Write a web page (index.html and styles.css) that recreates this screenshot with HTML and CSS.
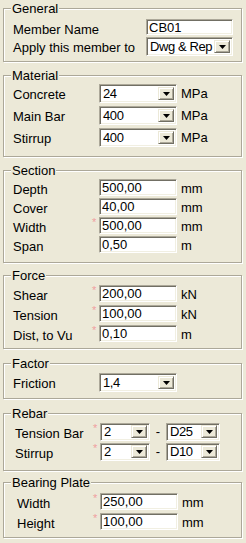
FILE: index.html
```html
<!DOCTYPE html>
<html lang="en">
<head>
  <meta charset="UTF-8">
  <title>Member Input</title>
  <link rel="stylesheet" href="styles.css">
</head>
<body>
  <div class="panel">

    <fieldset class="general">
      <legend>General</legend>
      <div class="rows">
        <div class="row"><span class="lbl wide">Member Name</span><span class="req"></span><input class="txt" value="CB01"></div>
        <div class="row"><span class="lbl wide">Apply this member to</span><span class="req"></span><div class="combo"><span class="val">Dwg &amp; Rep</span><span class="btn"><svg width="7" height="4"><polygon points="0,0 7,0 3.5,4"/></svg></span></div></div>
      </div>
    </fieldset>

    <fieldset class="material">
      <legend>Material</legend>
      <div class="rows">
        <div class="row"><span class="lbl">Concrete</span><span class="req"></span><div class="combo"><span class="val">24</span><span class="btn"><svg width="7" height="4"><polygon points="0,0 7,0 3.5,4"/></svg></span></div><span class="unit">MPa</span></div>
        <div class="row"><span class="lbl">Main Bar</span><span class="req"></span><div class="combo"><span class="val">400</span><span class="btn"><svg width="7" height="4"><polygon points="0,0 7,0 3.5,4"/></svg></span></div><span class="unit">MPa</span></div>
        <div class="row"><span class="lbl">Stirrup</span><span class="req"></span><div class="combo"><span class="val">400</span><span class="btn"><svg width="7" height="4"><polygon points="0,0 7,0 3.5,4"/></svg></span></div><span class="unit">MPa</span></div>
      </div>
    </fieldset>

    <fieldset class="section">
      <legend>Section</legend>
      <div class="rows">
        <div class="row"><span class="lbl">Depth</span><span class="req"></span><input class="txt" value="500,00"><span class="unit">mm</span></div>
        <div class="row"><span class="lbl">Cover</span><span class="req"></span><input class="txt" value="40,00"><span class="unit">mm</span></div>
        <div class="row"><span class="lbl">Width</span><span class="req">*</span><input class="txt" value="500,00"><span class="unit">mm</span></div>
        <div class="row"><span class="lbl">Span</span><span class="req"></span><input class="txt" value="0,50"><span class="unit">m</span></div>
      </div>
    </fieldset>

    <fieldset class="force">
      <legend>Force</legend>
      <div class="rows">
        <div class="row"><span class="lbl">Shear</span><span class="req">*</span><input class="txt" value="200,00"><span class="unit">kN</span></div>
        <div class="row"><span class="lbl">Tension</span><span class="req">*</span><input class="txt" value="100,00"><span class="unit">kN</span></div>
        <div class="row"><span class="lbl">Dist, to Vu</span><span class="req">*</span><input class="txt" value="0,10"><span class="unit">m</span></div>
      </div>
    </fieldset>

    <fieldset class="factor">
      <legend>Factor</legend>
      <div class="rows">
        <div class="row"><span class="lbl">Friction</span><span class="req"></span><div class="combo"><span class="val">1,4</span><span class="btn"><svg width="7" height="4"><polygon points="0,0 7,0 3.5,4"/></svg></span></div></div>
      </div>
    </fieldset>

    <fieldset class="rebar">
      <legend>Rebar</legend>
      <div class="rows">
        <div class="row">
          <span class="lbl">Tension Bar</span><span class="req">*</span>
          <div class="combo small"><span class="val">2</span><span class="btn"><svg width="7" height="4"><polygon points="0,0 7,0 3.5,4"/></svg></span></div>
          <span class="dash">-</span>
          <div class="combo dia"><span class="val">D25</span><span class="btn"><svg width="7" height="4"><polygon points="0,0 7,0 3.5,4"/></svg></span></div>
        </div>
        <div class="row">
          <span class="lbl">Stirrup</span><span class="req">*</span>
          <div class="combo small"><span class="val">2</span><span class="btn"><svg width="7" height="4"><polygon points="0,0 7,0 3.5,4"/></svg></span></div>
          <span class="dash">-</span>
          <div class="combo dia"><span class="val">D10</span><span class="btn"><svg width="7" height="4"><polygon points="0,0 7,0 3.5,4"/></svg></span></div>
        </div>
      </div>
    </fieldset>

    <fieldset class="bearing">
      <legend>Bearing Plate</legend>
      <div class="rows">
        <div class="row"><span class="lbl">Width</span><span class="req">*</span><input class="txt" value="250,00"><span class="unit">mm</span></div>
        <div class="row"><span class="lbl">Height</span><span class="req">*</span><input class="txt" value="100,00"><span class="unit">mm</span></div>
      </div>
    </fieldset>

  </div>
</body>
</html>
```

FILE: styles.css
```css
* { box-sizing: border-box; }
body {
  margin: 0;
  width: 246px;
  height: 543px;
  overflow: hidden;
  background: #ece9d8;
  color: #000;
  font: 13px/15px "Liberation Sans", Arial, sans-serif;
}
.panel { padding: 1px 4px 0 3px; }

/* group boxes */
fieldset {
  margin: 6px 0 0;
  padding: 0;
  min-width: 0;
  border: 1px solid #aca899;
  box-shadow: inset 1px 1px 0 #fff, 1px 1px 0 #fff;
}
legend {
  margin-left: 7px;
  padding: 0 1px;
  line-height: 15px;
  background: #ece9d8;
}
.rows { display: flex; flex-direction: column; }

.general { margin-top: 0; }
.general .rows { padding: 3px 0 5px; gap: 2px; }
.general .txt { height: 16px; }
.material .rows { padding: 1px 0 9px; gap: 3px; }
.section .rows { padding: 1px 0 9px; gap: 2px; }
.force { margin-top: 5px; }
.force .rows { padding: 2px 0 6px; gap: 3px; }
.factor { margin-top: 7px; }
.factor .rows { padding: 2px 0 6px; }
.rebar { margin-top: 7px; }
.rebar .rows { padding: 2px 0 9px; gap: 2px; }
.rebar .combo { height: 18px; padding: 1px 2px 2px; }
.rebar .lbl { margin-left: 11px; width: 78px; }
.bearing { margin-top: 4px; }
.bearing .rows { padding: 3px 0 7px; gap: 3px; }
.bearing .lbl { margin-left: 13px; width: 76px; }

/* rows */
.row { display: flex; align-items: flex-start; }
.lbl {
  width: 79px;
  height: 16px;
  margin-left: 9px;
  padding-top: 3px;
  white-space: nowrap;
}
.lbl.wide { width: 126px; }
.req {
  width: 7px;
  height: 16px;
  padding-top: 1px;
  color: #f0a0a0;
  font-size: 11px;
  line-height: 9px;
}
.unit { height: 16px; margin-left: 4px; padding-top: 2px; }

/* sunken text box */
.txt {
  width: 78px;
  height: 17px;
  margin: 0;
  padding: 0 2px;
  border: 1px solid;
  border-color: #aca899 #fff #fff #aca899;
  box-shadow: inset 1px 1px 0 #716f64, inset -1px -1px 0 #f1efe2;
  background: #fff;
  font: inherit;
  line-height: 13px;
  outline: none;
}
.general .txt { width: 87px; }

/* drop-down */
.combo {
  display: flex;
  align-items: stretch;
  width: 78px;
  height: 19px;
  border: 1px solid;
  border-color: #aca899 #fff #fff #aca899;
  box-shadow: inset 1px 1px 0 #716f64, inset -1px -1px 0 #f1efe2;
  background: #fff;
  padding: 2px;
}
.general .combo { width: 87px; }
.combo .val {
  flex: 1;
  padding-left: 1px;
  line-height: 13px;
  letter-spacing: -0.4px;
  white-space: nowrap;
}
.combo .btn {
  width: 16px;
  display: flex;
  align-items: center;
  justify-content: center;
  background: #ece9d8;
  border: 1px solid;
  border-color: #ece9d8 #716f64 #716f64 #ece9d8;
  box-shadow: inset 1px 1px 0 #fff, inset -1px -1px 0 #aca899;
}
.combo svg { display: block; fill: #000; }
.combo.small { width: 50px; }
.combo.dia { width: 54px; }
.dash { width: 16px; height: 16px; text-align: center; padding-top: 1px; }
```
